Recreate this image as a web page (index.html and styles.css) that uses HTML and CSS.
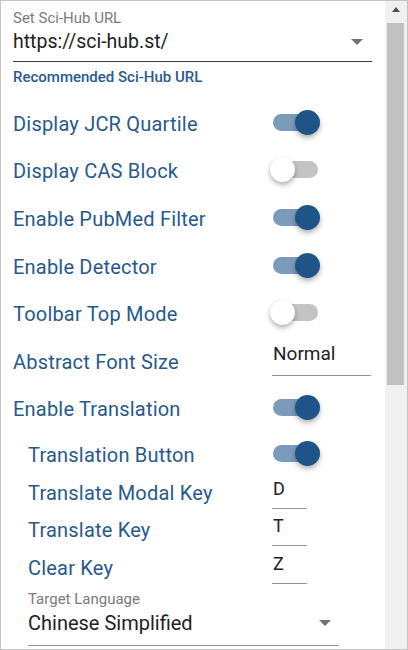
FILE: index.html
```html
<!DOCTYPE html>
<html>
<head>
<meta charset="utf-8">
<link rel="stylesheet" href="styles.css">
</head>
<body>
<div class="frame">
  <main class="content">
    <div class="select url-select">
      <div class="select-label">Set Sci-Hub URL</div>
      <div class="select-row">
        <span class="select-value">https://sci-hub.st/</span>
        <span class="caret"></span>
      </div>
    </div>
    <div class="hint">Recommended Sci-Hub URL</div>

    <div class="rows">
      <div class="row"><span class="row-label">Display JCR Quartile</span><span class="switch on"><span class="track"></span><span class="thumb"></span></span></div>
      <div class="row"><span class="row-label">Display CAS Block</span><span class="switch off"><span class="track"></span><span class="thumb"></span></span></div>
      <div class="row"><span class="row-label">Enable PubMed Filter</span><span class="switch on"><span class="track"></span><span class="thumb"></span></span></div>
      <div class="row"><span class="row-label">Enable Detector</span><span class="switch on"><span class="track"></span><span class="thumb"></span></span></div>
      <div class="row"><span class="row-label">Toolbar Top Mode</span><span class="switch off"><span class="track"></span><span class="thumb"></span></span></div>
      <div class="row"><span class="row-label">Abstract Font Size</span><span class="text-field wide">Normal</span></div>
      <div class="row"><span class="row-label">Enable Translation</span><span class="switch on"><span class="track"></span><span class="thumb"></span></span></div>
    </div>

    <div class="sub">
      <div class="sub-row"><span class="row-label">Translation Button</span><span class="switch on"><span class="track"></span><span class="thumb"></span></span></div>
      <div class="sub-row"><span class="row-label">Translate Modal Key</span><span class="text-field key">D</span></div>
      <div class="sub-row"><span class="row-label">Translate Key</span><span class="text-field key">T</span></div>
      <div class="sub-row"><span class="row-label">Clear Key</span><span class="text-field key">Z</span></div>
      <div class="select lang-select">
        <div class="select-label">Target Language</div>
        <div class="select-row">
          <span class="select-value">Chinese Simplified</span>
          <span class="caret"></span>
        </div>
      </div>
    </div>
  </main>
  <div class="scrollbar">
    <span class="scroll-arrow"></span>
    <span class="scroll-thumb"></span>
  </div>
</div>
</body>
</html>
```

FILE: styles.css
```css
html, body {
  margin: 0;
  padding: 0;
  background: #ffffff;
}

body {
  font-family: Roboto, "Noto Sans", sans-serif;
  width: 408px;
  height: 650px;
  overflow: hidden;
}

.frame {
  box-sizing: border-box;
  width: 408px;
  height: 650px;
  border: 1px solid #c4c4c4;
  display: flex;
  background: #ffffff;
}

.content {
  flex: 1;
  overflow: hidden;
  padding: 0 13px 0 12px;
}

/* select fields */
.select-label {
  font-size: 15px;
  line-height: 16px;
  color: #7a7a7a;
}

.url-select {
  padding-top: 9px;
}

.select-row {
  display: flex;
  align-items: center;
  justify-content: space-between;
  height: 30px;
  padding-bottom: 5px;
  border-bottom: 1px solid #3c3c3c;
}

.select-value {
  font-size: 19.5px;
  color: #222222;
}

.caret {
  width: 0;
  height: 0;
  border-left: 6.5px solid transparent;
  border-right: 6.5px solid transparent;
  border-top: 6px solid #737373;
  margin-right: 9px;
  margin-top: 1px;
}

.hint {
  margin-top: 7px;
  font-size: 15px;
  line-height: 17px;
  font-weight: 500;
  color: #2a5b8e;
}

/* rows */
.rows {
  margin-top: 14px;
}

.row,
.sub-row {
  display: flex;
  align-items: center;
  justify-content: space-between;
  height: 47.6px;
}

.sub-row {
  height: 37.5px;
}

.row-label {
  font-size: 20px;
  color: #28598c;
  letter-spacing: 0.2px;
}

/* switches */
.switch {
  display: flex;
  align-items: center;
  width: 52px;
  margin-right: 50px;
  margin-top: -3px;
}

.track {
  display: block;
  width: 42.5px;
  height: 17px;
  border-radius: 9px;
}

.thumb {
  display: block;
  width: 25px;
  height: 25px;
  border-radius: 50%;
  z-index: 1;
  box-shadow: 0 2px 4px rgba(0, 0, 0, 0.22), 0 4px 6px rgba(0, 0, 0, 0.12);
}

.switch.on .track {
  margin-left: 3px;
  background: #7b9bbb;
}

.switch.on .thumb {
  margin-left: -20.5px;
  background: #1e5487;
}

.switch.off .thumb {
  order: -1;
  background: #ffffff;
}

.switch.off .track {
  margin-left: -20px;
  background: #c4c4c4;
}

/* text fields */
.text-field {
  align-self: flex-start;
  box-sizing: border-box;
  font-size: 19px;
  line-height: 24px;
  color: #222222;
  border-bottom: 1px solid #949494;
}

.text-field.wide {
  width: 99px;
  margin-right: 1px;
  padding: 4px 0 9px 1px;
}

.text-field.key {
  width: 35px;
  margin-right: 65px;
  font-size: 18px;
  line-height: 20px;
  padding: 4.5px 0 9px 1px;
}

/* translation sub-section */
.sub {
  margin-top: 3.5px;
  padding-left: 15px;
}

.lang-select {
  margin-top: 4px;
  margin-right: 33px;
}

.lang-select .select-value {
  font-size: 20px;
}

.lang-select .select-row {
  height: 32px;
  padding-bottom: 6px;
  border-bottom: 1px solid #949494;
}

.lang-select .caret {
  margin-right: 8px;
}

/* scrollbar */
.scrollbar {
  width: 22px;
  background: #f0f0f0;
  display: flex;
  flex-direction: column;
}

.scroll-arrow {
  align-self: center;
  width: 0;
  height: 0;
  margin-top: 6px;
  border-left: 4.5px solid transparent;
  border-right: 4.5px solid transparent;
  border-bottom: 5px solid #505050;
}

.scroll-thumb {
  margin: 11px 0 0 2px;
  width: 17px;
  height: 362px;
  background: #c1c1c1;
}
```
